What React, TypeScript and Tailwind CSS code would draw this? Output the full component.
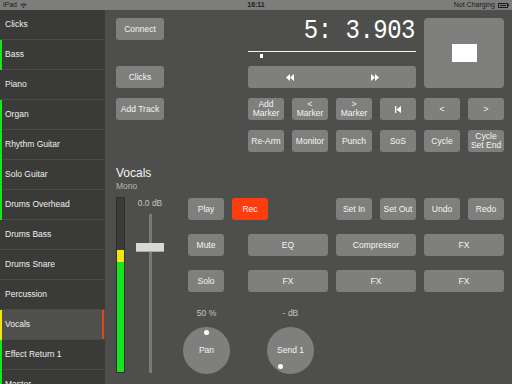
import React from 'react';

const tracks = [
    { name: 'Clicks', bar: '' },
    { name: 'Bass', bar: 'bg-[#19e619]' },
    { name: 'Piano', bar: '' },
    { name: 'Organ', bar: 'bg-[#19e619]' },
    { name: 'Rhythm Guitar', bar: 'bg-[#19e619]' },
    { name: 'Solo Guitar', bar: 'bg-[#19e619]' },
    { name: 'Drums Overhead', bar: 'bg-[#19e619]' },
    { name: 'Drums Bass', bar: '' },
    { name: 'Drums Snare', bar: '' },
    { name: 'Percussion', bar: '' },
    { name: 'Vocals', bar: 'bg-[#f5e60a]', selected: true },
    { name: 'Effect Return 1', bar: 'bg-[#19e619]' },
    { name: 'Master', bar: 'bg-[#19e619]' },
];

function Btn({ children, className = '' }: { children: React.ReactNode; className?: string }) {
    return (
        <div className={`h-[22px] rounded-[3px] bg-[#7f807d] text-[#f4f4f2] text-[8.5px] leading-[9px] flex items-center justify-center text-center ${className}`}>
            {children}
        </div>
    );
}

function Knob({ label, value, dot }: { label: string; value: string; dot: string }) {
    return (
        <div className="flex flex-col items-center w-[47px]">
            <div className="text-[8.5px] text-[#c4c5c2] h-[14px] leading-[14px]">{value}</div>
            <div className="relative mt-[7px] w-[47px] h-[47px] rounded-full bg-[#7f807d] flex items-center justify-center text-[8.5px] text-[#f4f4f2]">
                {label}
                <div className={`absolute w-[5px] h-[5px] rounded-full bg-white ${dot}`} />
            </div>
        </div>
    );
}

export default function App() {
    return (
        <div className="w-[512px] h-[384px] overflow-hidden flex flex-col bg-[#4e4f4c] font-['Liberation_Sans',Arial,sans-serif]">
            {/* status bar */}
            <div className="h-[10px] bg-[#7d7e7b] flex items-center justify-between px-[3px] text-[7px] leading-[10px] text-[#1c1c1c]">
                <div className="flex items-center gap-[3px] w-[90px]">
                    iPad
                    <svg width="7" height="5" viewBox="0 0 7 5">
                        <path d="M0.5 1.8 Q3.5 -0.6 6.5 1.8 M1.6 2.9 Q3.5 1.3 5.4 2.9" stroke="#1c1c1c" strokeWidth="0.8" fill="none" />
                        <circle cx="3.5" cy="4.2" r="0.7" fill="#1c1c1c" />
                    </svg>
                </div>
                <div className="font-bold">16:11</div>
                <div className="flex items-center justify-end gap-[3px] w-[90px]">
                    Not Charging
                    <div className="flex items-center">
                        <div className="w-[10px] h-[5px] border border-[#1c1c1c] p-[1px]">
                            <div className="w-full h-full bg-[#1c1c1c]" />
                        </div>
                        <div className="w-[1px] h-[2px] bg-[#1c1c1c]" />
                    </div>
                </div>
            </div>

            <div className="flex flex-1 min-h-0">
                {/* track list */}
                <div className="w-[105px] bg-[#3a3a38] flex flex-col shrink-0">
                    {tracks.map(t => (
                        <div
                            key={t.name}
                            className={`relative h-[30px] shrink-0 border-b border-[#4a4a48] flex items-center pl-[5px] text-[8.5px] text-[#f0f0ee] ${t.selected ? 'bg-[#50514e]' : ''}`}
                        >
                            {t.bar && <div className={`absolute left-0 top-0 bottom-[-1px] w-[2px] ${t.bar}`} />}
                            {t.name}
                            {t.selected && <div className="absolute right-[1px] top-0 bottom-0 w-[2px] bg-[#e0451c]" />}
                        </div>
                    ))}
                </div>

                {/* main panel */}
                <div className="flex-1 pl-[11px] pt-[8px] flex flex-col">
                    <div className="flex">
                        <div className="w-[48px] flex flex-col">
                            <Btn>Connect</Btn>
                            <Btn className="mt-[26px]">Clicks</Btn>
                            <Btn className="mt-[10px]">Add Track</Btn>
                        </div>

                        <div className="ml-[84px] w-[256px] flex flex-col gap-[10px]">
                            <div className="flex gap-[8px]">
                                <div className="w-[168px] flex flex-col">
                                    <div className="h-[33px] flex items-start justify-end pr-[1px]">
                                        <div className="font-['Liberation_Mono',monospace] text-[24px] leading-[24px] text-white tracking-[-0.5px] scale-y-[1.12] origin-top whitespace-pre">
                                            5: 3.903
                                        </div>
                                    </div>
                                    <div className="h-[1px] bg-[#f2f2f0]" />
                                    <div className="h-[5px] flex">
                                        <div className="ml-[12px] mt-[2px] w-[3px] h-[4px] bg-white" />
                                    </div>
                                    <div className="mt-[9px] h-[22px] rounded-[3px] bg-[#7f807d] flex items-center text-white">
                                        <svg className="ml-[38px]" width="8" height="7" viewBox="0 0 8 7">
                                            <path d="M4 0 L0 3.5 L4 7 Z M8 0 L4 3.5 L8 7 Z" fill="white" />
                                        </svg>
                                        <svg className="ml-[77px]" width="8" height="7" viewBox="0 0 8 7">
                                            <path d="M0 0 L4 3.5 L0 7 Z M4 0 L8 3.5 L4 7 Z" fill="white" />
                                        </svg>
                                    </div>
                                </div>
                                <div className="w-[80px] h-[70px] rounded-[4px] bg-[#7f807d] flex items-center justify-center">
                                    <div className="w-[25px] h-[18px] bg-white" />
                                </div>
                            </div>

                            <div className="grid grid-cols-6 gap-[8px]">
                                <Btn>Add<br />Marker</Btn>
                                <Btn>&lt;<br />Marker</Btn>
                                <Btn>&gt;<br />Marker</Btn>
                                <Btn>
                                    <svg width="6" height="7" viewBox="0 0 6 7">
                                        <path d="M0 0 H1.3 V7 H0 Z M6 0 L1.5 3.5 L6 7 Z" fill="white" />
                                    </svg>
                                </Btn>
                                <Btn>&lt;</Btn>
                                <Btn>&gt;</Btn>
                            </div>

                            <div className="grid grid-cols-6 gap-[8px]">
                                <Btn>Re-Arm</Btn>
                                <Btn>Monitor</Btn>
                                <Btn>Punch</Btn>
                                <Btn>SoS</Btn>
                                <Btn>Cycle</Btn>
                                <Btn>Cycle<br />Set End</Btn>
                            </div>
                        </div>
                    </div>

                    {/* channel strip */}
                    <div className="mt-[14px] text-[12px] leading-[14px] text-[#f4f4f2]">Vocals</div>
                    <div className="mt-[1px] text-[8.5px] leading-[10px] text-[#b5b6b3]">Mono</div>

                    <div className="mt-[6px] flex">
                        {/* meter */}
                        <div className="w-[9px] h-[176px] border border-[#2f302e] bg-[#3b3c39] flex flex-col justify-end">
                            <div className="h-[12px] bg-[#f5e60a]" />
                            <div className="h-[110px] bg-[#19e619]" />
                        </div>

                        {/* fader */}
                        <div className="ml-[11px] w-[28px] flex flex-col items-center">
                            <div className="mt-[1px] text-[8.5px] leading-[10px] text-[#c4c5c2]">0.0 dB</div>
                            <div className="relative mt-[6px] w-[3px] h-[159px] bg-[#7a7b78]">
                                <div className="absolute top-[29px] left-[-13px] w-[28px] h-[9px] bg-[#d8d9d6] border-b border-[#a9aaa7]" />
                            </div>
                        </div>

                        <div className="ml-[24px] flex-1 pr-[8px] flex flex-col">
                            <div className="mt-[1px] flex">
                                <Btn className="w-[36px]">Play</Btn>
                                <Btn className="w-[36px] ml-[8px] !bg-[#fd3c10]">Rec</Btn>
                                <div className="ml-auto grid grid-cols-4 gap-[8px] w-[168px]">
                                    <Btn>Set In</Btn>
                                    <Btn>Set Out</Btn>
                                    <Btn>Undo</Btn>
                                    <Btn>Redo</Btn>
                                </div>
                            </div>
                            <div className="mt-[14px] flex">
                                <Btn className="w-[36px]">Mute</Btn>
                                <div className="ml-[24px] flex-1 grid grid-cols-3 gap-[8px]">
                                    <Btn>EQ</Btn>
                                    <Btn>Compressor</Btn>
                                    <Btn>FX</Btn>
                                </div>
                            </div>
                            <div className="mt-[14px] flex">
                                <Btn className="w-[36px]">Solo</Btn>
                                <div className="ml-[24px] flex-1 grid grid-cols-3 gap-[8px]">
                                    <Btn>FX</Btn>
                                    <Btn>FX</Btn>
                                    <Btn>FX</Btn>
                                </div>
                            </div>
                            <div className="mt-[14px] flex">
                                <div className="ml-[-5px]">
                                    <Knob label="Pan" value="50 %" dot="top-[3px] left-[21px]" />
                                </div>
                                <div className="ml-[37px]">
                                    <Knob label="Send 1" value="- dB" dot="bottom-[5px] left-[11px]" />
                                </div>
                            </div>
                        </div>
                    </div>
                </div>
            </div>
        </div>
    );
}
